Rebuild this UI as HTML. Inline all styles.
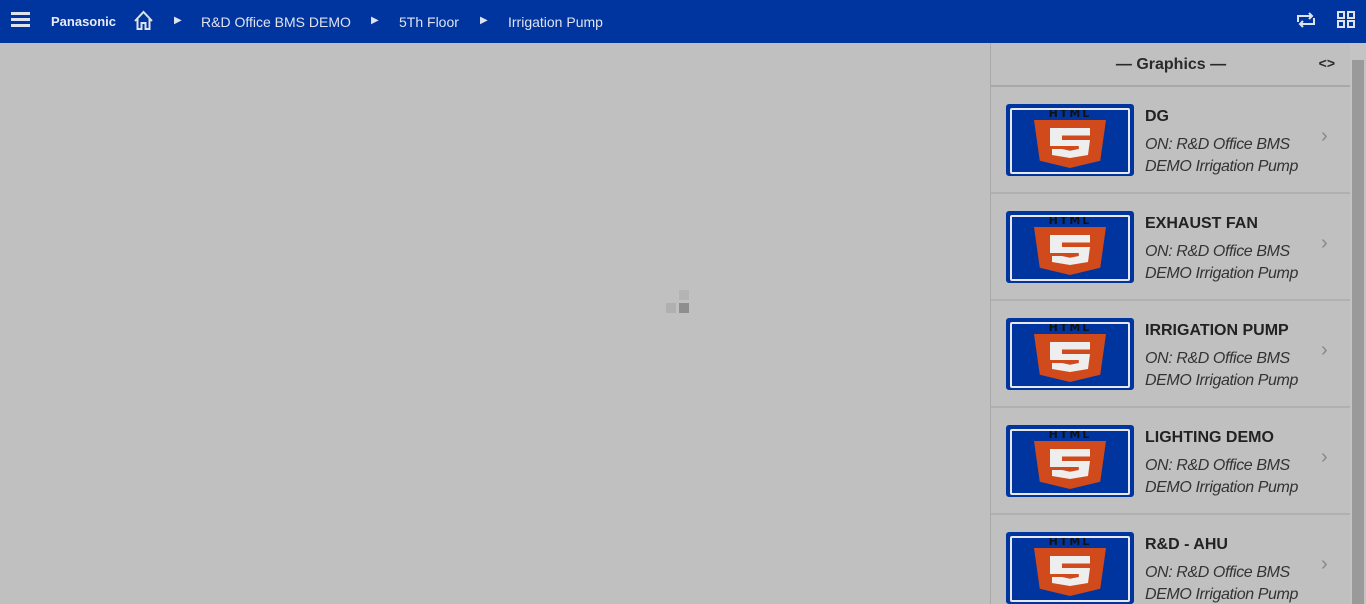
<!DOCTYPE html><html><head><style>
html,body{margin:0;width:1366px;height:604px;overflow:hidden}
body{background:#c0c0c0;font-family:"Liberation Sans",sans-serif;position:relative}
.top{position:absolute;left:0;top:0;width:1366px;height:43px;background:#0035a0;color:#dfe3ee;font-size:14px}
.top span{position:absolute;top:14px}
.panel{position:absolute;left:990px;top:43px;width:360px;height:561px;overflow:hidden;background:#c0c0c0;border-left:1px solid #a8a8a8}
.ph{height:42px;border-bottom:2px solid #a8a8a8;text-align:center;line-height:44px;font-weight:bold;font-size:16px;color:#2a2a2a;position:relative}
.item{height:105px;border-bottom:2px solid #b0b0b0;position:relative}
.th{position:absolute;left:15px;top:17px;width:124px;height:68px;background:#0035a0;border:2px solid #0035a0;border-radius:3px}
.th .in{position:absolute;left:2px;top:2px;width:116px;height:62px;border:2px solid #e8e8e8;border-radius:2px;overflow:hidden}
.t1{position:absolute;left:154px;top:21px;font-weight:bold;font-size:16px;color:#222}
.t2{position:absolute;left:154px;top:47px;font-style:italic;font-size:16px;color:#333;line-height:22px;letter-spacing:-0.4px}
.ch{position:absolute;left:330px;top:38px;color:#888;font-size:20px}
.sb{position:absolute;left:1350px;top:43px;width:16px;height:561px;background:#c4c4c4}
.sb div{position:absolute;left:2px;top:17px;width:12px;height:544px;background:#9a9a9a}
</style></head><body>
<div class="top">
<svg style="position:absolute;left:11px;top:12px" width="19" height="16"><rect y="0" width="19" height="3" fill="#dfe3ee"/><rect y="6" width="19" height="3" fill="#dfe3ee"/><rect y="12" width="19" height="3" fill="#dfe3ee"/></svg>
<span style="left:51px;top:14px;font-weight:bold;font-size:13px;color:#e8ebf2">Panasonic</span>
<svg style="position:absolute;left:133px;top:10px" width="21" height="21" fill="none" stroke="#dfe3ee" stroke-width="2"><path d="M2 11L10.5 2L19 11M4.5 9v10h4v-6h4v6h4V9"/></svg>
<span style="left:174px;top:15px;font-size:10px">▶</span>
<span style="left:201px">R&amp;D Office BMS DEMO</span>
<span style="left:371px;top:15px;font-size:10px">▶</span>
<span style="left:399px">5Th Floor</span>
<span style="left:480px;top:15px;font-size:10px">▶</span>
<span style="left:508px">Irrigation Pump</span>
<svg style="position:absolute;left:1296px;top:12px" width="20" height="16" fill="none" stroke="#dfe3ee" stroke-width="2"><path d="M2 10V4h14M13 1l3 3-3 3M18 6v6H4M7 9l-3 3 3 3"/></svg>
<svg style="position:absolute;left:1337px;top:11px" width="19" height="17" fill="none" stroke="#dfe3ee" stroke-width="2"><rect x="1" y="1" width="6" height="6"/><rect x="11" y="1" width="6" height="6"/><rect x="1" y="10" width="6" height="6"/><rect x="11" y="10" width="6" height="6"/></svg>
</div>
<div style="position:absolute;left:666px;top:303px;width:10px;height:10px;background:#b0b0b0"></div>
<div style="position:absolute;left:679px;top:290px;width:10px;height:10px;background:#b4b4b4"></div>
<div style="position:absolute;left:679px;top:303px;width:10px;height:10px;background:#8e8e8e"></div>
<div class="panel">
<div class="ph">— Graphics —<span style="position:absolute;right:16px;top:-2px;font-size:14px">&lt;&gt;</span></div>
<div id="items"></div>
</div>
<div class="sb"><div></div></div>
<script>
var n=["DG","EXHAUST FAN","IRRIGATION PUMP","LIGHTING DEMO","R&amp;D - AHU"],h="";
n.forEach(function(t){h+='<div class="item"><div class="th"><div class="in"><div style="position:absolute;left:26px;top:-3px;width:64px;height:12px;font-size:11px;font-weight:bold;color:#111;text-align:center;letter-spacing:2px;font-family:\'DejaVu Sans\'">HTML</div><div style="position:absolute;left:22px;top:10px;width:72px;height:48px;background:#d04a1c;clip-path:polygon(0 0,100% 0,92% 85%,50% 100%,8% 85%)"></div><div style="position:absolute;left:38px;top:18px;width:40px;height:30px;background:#eee;clip-path:polygon(0 0,100% 0,100% 25%,30% 25%,30% 40%,100% 40%,95% 90%,50% 100%,5% 90%,5% 70%,30% 70%,50% 76%,72% 70%,72% 60%,0 60%)"></div></div></div><div class="t1">'+t+'</div><div class="t2">ON: R&amp;D Office BMS<br>DEMO Irrigation Pump</div><div class="ch">›</div></div>'});
document.getElementById("items").innerHTML=h;
</script>
</body></html>
